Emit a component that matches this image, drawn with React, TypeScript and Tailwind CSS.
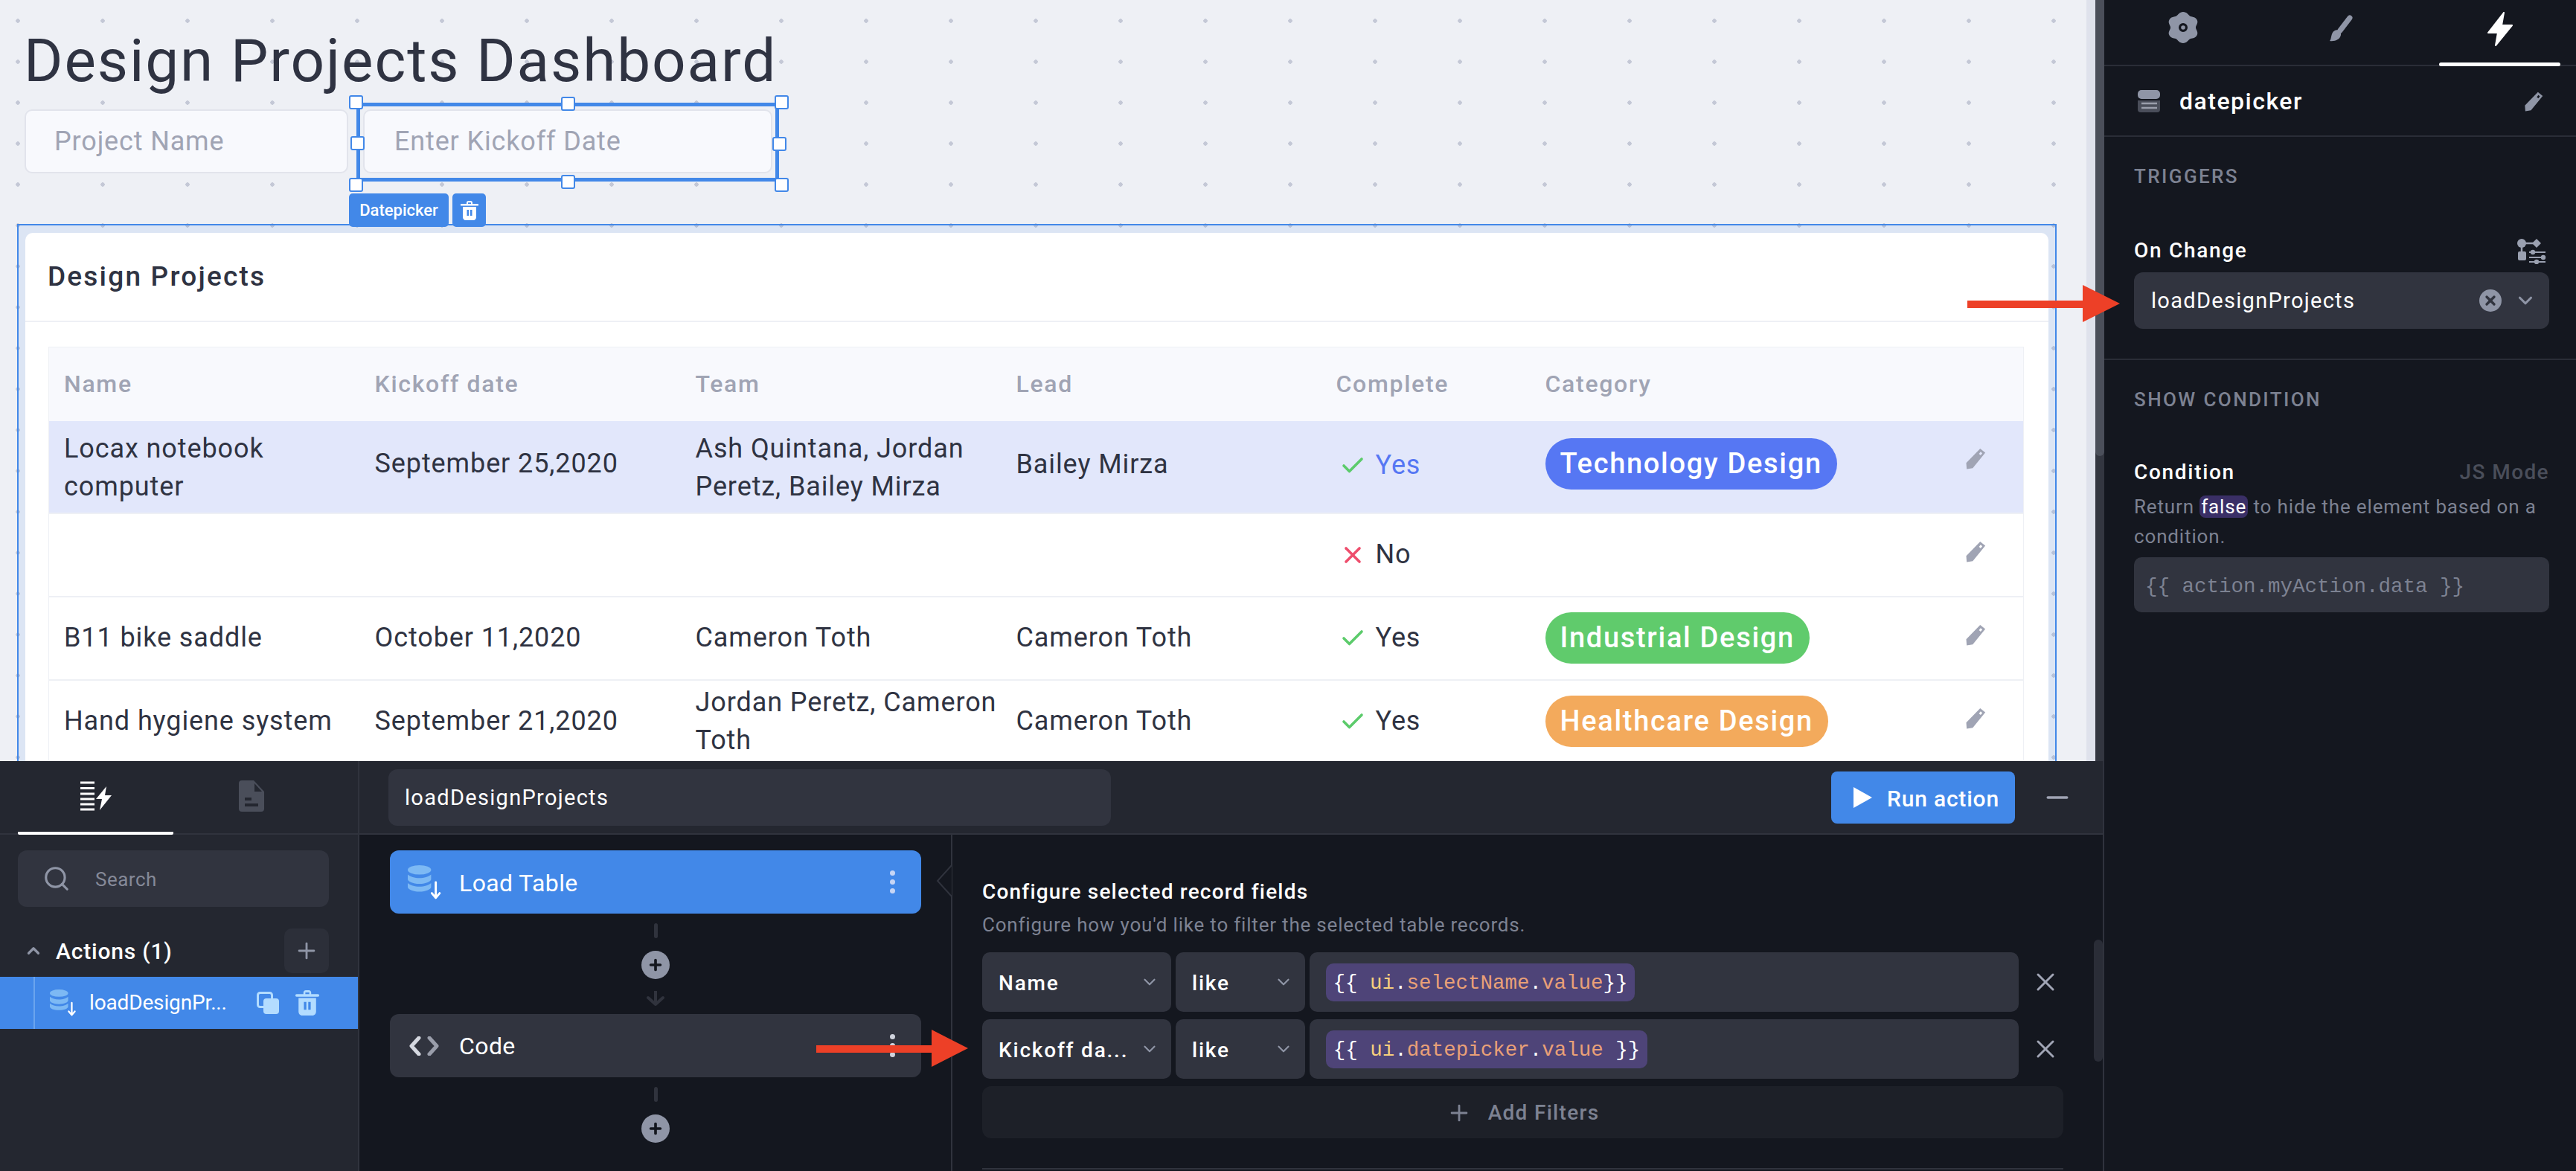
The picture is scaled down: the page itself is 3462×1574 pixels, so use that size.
import React from 'react';
import { Check, ChevronDown, ChevronUp, Plus, Search, X, Minus } from 'lucide-react';

const TrashIcon = ({ className }: { className?: string }) => (
  <svg viewBox="0 0 24 26" className={className} fill="currentColor">
    <path d="M8 4V2.500C8 1.100 9 0 10.500 0h3C15 0 16 1.100 16 2.500V4h7a1 1 0 0 1 0 2.600H1A1 1 0 0 1 1 4zM10 4h4V2.200h-4z" />
    <path fillRule="evenodd" d="M3 8h18v14c0 2.200-1.600 4-3.600 4H6.600C4.600 26 3 24.200 3 22zM8.500 12v8h2.500v-8zM13 12v8h2.500v-8z" />
  </svg>
);

const PencilIcon = ({ className }: { className?: string }) => (
  <svg viewBox="0 0 24 24" className={className} fill="currentColor">
    <path fillRule="evenodd" d="M17 1.500l5.500 4.500L9 22.500 2.500 23.500 2 17zM17.500 5l-1.800 2.200 1.800 1.500 1.800-2.200z" />
  </svg>
);

const DbIcon = ({ className }: { className?: string }) => (
  <svg viewBox="0 0 44 44" className={className}>
    <g fill="#7db9f4">
      <ellipse cx="15" cy="6" rx="15" ry="6" />
      <path d="M0 12c3 3 9 4.500 15 4.500S27 15 30 12v6c0 3-6.500 6-15 6S0 21 0 18z" />
      <path d="M0 23c3 3 9 4.500 15 4.500S27 26 30 23v5c0 3-6.500 6-15 6S0 31 0 28z" />
    </g>
    <path d="M36 22v20M31 36l5 6 5-6" fill="none" stroke="white" strokeWidth="2.800" strokeLinecap="round" strokeLinejoin="round" />
  </svg>
);

const Handle = ({ className }: { className: string }) => (
  <div className={`absolute w-[19px] h-[19px] bg-white border-2 border-[#4288e8] rounded-[3px] ${className}`} />
);

const EditCell = ({ className }: { className: string }) => (
  <td>
    <PencilIcon className={`-ml-[5px] w-[30px] h-[30px] text-[#a0a4b4] ${className}`} />
  </td>
);

const Done = ({ highlight }: { highlight?: boolean }) => (
  <span className="flex items-center gap-[13px] pl-[4px]">
    <Check className="w-[36px] h-[36px] text-[#5ccb6b]" strokeWidth={2.4} />
    <span className={highlight ? 'text-[#5677f3]' : ''}>Yes</span>
  </span>
);

const Pill = ({ label, className }: { label: string; className: string }) => (
  <span className={`inline-flex items-center h-[69px] px-[20px] rounded-[35px] text-white text-[38px] tracking-[1.700px] font-medium ${className}`}>
    {label}
  </span>
);

const Row = ({ children, className }: { children: React.ReactNode; className: string }) => (
  <tr className={`border-b-2 border-[#eef0f5] ${className}`}>{children}</tr>
);

const Connector = () => (
  <div className="flex flex-col items-center">
    <div className="w-[5px] h-[20px] mt-[13px] rounded-full bg-[#30333d]" />
    <div className="w-[38px] h-[38px] mt-[17px] rounded-full bg-[#8f95a6] flex items-center justify-center">
      <Plus className="w-[22px] h-[22px] text-[#14171f]" strokeWidth={4} />
    </div>
  </div>
);

const Dots = ({ className }: { className: string }) => (
  <div className="flex flex-col gap-[5px]">
    <div className={`w-[7px] h-[7px] rounded-full ${className}`} />
    <div className={`w-[7px] h-[7px] rounded-full ${className}`} />
    <div className={`w-[7px] h-[7px] rounded-full ${className}`} />
  </div>
);

const FilterSelect = ({ label, className }: { label: string; className: string }) => (
  <div className={`h-full bg-[#31343f] rounded-[10px] flex items-center justify-between pl-[22px] pr-[16px] ${className}`}>
    <span className="pt-[3px] whitespace-nowrap text-white text-[28px] font-medium tracking-[1.800px]">{label}</span>
    <ChevronDown className="shrink-0 w-[26px] h-[26px] text-[#8f95a6]" />
  </div>
);

const FilterRow = ({ label, field, chip }: { label: string; field: string; chip: string }) => (
  <div className="flex items-center h-[80px] gap-[6px]">
    <FilterSelect label={label} className="w-[254px]" />
    <FilterSelect label="like" className="w-[174px]" />
    <div className="h-full w-[953px] bg-[#31343f] rounded-[10px] flex items-center pl-[22px]">
      <span className={`${chip} h-[51px] pt-[3px] flex items-center justify-center whitespace-pre rounded-[10px] bg-[#4e4478] text-white font-['Liberation_Mono',monospace] text-[27.500px]`}>
        {'{{ '}
        <span className="text-[#f6cf7d]">ui</span>.<span className="text-[#e9a077]">{field}</span>.<span className="text-[#e9a077]">value</span>
        {field === 'datepicker' ? ' }}' : '}}'}
      </span>
    </div>
    <X className="ml-[10px] w-[40px] h-[40px] text-[#a0a4b4]" strokeWidth={1.800} />
  </div>
);

const Arrow = ({ className, viewBox, points }: { className: string; viewBox: string; points: string }) => (
  <svg viewBox={viewBox} className={`absolute ${className}`}>
    <polygon points={points} fill="#ed4027" />
  </svg>
);

export default function App() {
  return (
    <div className="relative flex w-[3462px] h-[1574px] overflow-hidden font-['Roboto',sans-serif] text-[#2f3342]">
      {/* Editor column */}
      <div className="flex flex-col w-[2828px]">
        <div className="flex h-[1023px] overflow-hidden">
          <div className="w-[2804px] pt-[35px] bg-[#eef0f5] bg-[radial-gradient(circle_at_24px_28px,#c4c8d6_2.500px,transparent_3px)] bg-[length:114px_55px]">
            <h1 className="ml-[32px] text-[80px] leading-[94px] tracking-[1.900px] font-normal">Design Projects Dashboard</h1>
            <div className="flex gap-[20px] ml-[33px] mt-[18px] text-[36px] tracking-[0.850px] text-[#a0a4b4]">
              <div className="w-[435px] h-[86px] flex items-center pl-[38px] bg-[#f8f9fd] border-2 border-[#e2e4ec] rounded-[10px]">Project Name</div>
              <div className="relative w-[550px] h-[86px] flex items-center pl-[40px] bg-[#f8f9fd] border-2 border-[#e2e4ec] rounded-[10px]">
                Enter Kickoff Date
                <div className="absolute -left-[11px] -right-[11px] -top-[11px] -bottom-[13px] border-[5px] border-[#4288e8]">
                  <Handle className="-left-[15px] -top-[15px]" />
                  <Handle className="left-[270px] -top-[13px]" />
                  <Handle className="left-[557px] -top-[15px]" />
                  <Handle className="-left-[13px] top-[40px]" />
                  <Handle className="left-[554px] top-[41px]" />
                  <Handle className="-left-[15px] top-[96px]" />
                  <Handle className="left-[270px] top-[92px]" />
                  <Handle className="left-[557px] top-[96px]" />
                  <div className="absolute z-10 -left-[15px] top-[117px] flex gap-[5px] text-white tracking-normal">
                    <div className="h-[45px] w-[134px] flex items-center justify-center bg-[#4288e8] rounded-[5px] text-[22px] font-medium">Datepicker</div>
                    <div className="h-[45px] w-[45px] flex items-center justify-center bg-[#4288e8] rounded-[5px]">
                      <TrashIcon className="w-[24px] h-[26px]" />
                    </div>
                  </div>
                </div>
              </div>
            </div>

            {/* Table container, selected on the canvas */}
            <div className="ml-[23px] mt-[68px] w-[2741px] h-[760px] pt-[10px] px-[9px] border-2 border-[#4288e8] bg-[#4288e8]/10">
              <div className="h-full bg-white rounded-t-[10px]">
                <div className="h-[120px] flex items-center pl-[30px] border-b-2 border-[#eef0f5] text-[37px] font-medium tracking-[2.200px]">Design Projects</div>
                <div className="pt-[33px] pl-[31px]">
                  <table className="w-[2655px] table-fixed border-collapse text-[36px] leading-[51px] border border-[#eef0f5]">
                    <colgroup>
                      <col className="w-[416px]" />
                      <col className="w-[431px]" />
                      <col className="w-[431px]" />
                      <col className="w-[430px]" />
                      <col className="w-[281px]" />
                      <col className="w-[568px]" />
                      <col />
                    </colgroup>
                    <thead>
                      <tr className="h-[99px] bg-[#f8f9fd] text-[#a0a4b4] text-[32px] text-left">
                        {['Name', 'Kickoff date', 'Team', 'Lead', 'Complete', 'Category', ''].map(h => (
                          <th key={h} className="pl-[22px] first:pl-[20px] font-medium tracking-[1.700px]">{h}</th>
                        ))}
                      </tr>
                    </thead>
                    <tbody className="[&_td]:pl-[22px] [&_td:first-child]:pl-[20px] tracking-[0.900px]">
                      <Row className="h-[124px] bg-[#e2e7fb]">
                        <td className="pt-[3px]">Locax notebook computer</td>
                        <td className="pb-[8px]">September 25,2020</td>
                        <td className="pt-[3px]">Ash Quintana, Jordan Peretz, Bailey Mirza</td>
                        <td className="pb-[6px]">Bailey Mirza</td>
                        <td className="pb-[3px]"><Done highlight /></td>
                        <td><Pill label="Technology Design" className="bg-[#5677f3] -translate-y-[4px]" /></td>
                        <EditCell className="-translate-y-[11px]" />
                      </Row>
                      <Row className="h-[112px]">
                        <td />
                        <td />
                        <td />
                        <td />
                        <td>
                          <span className="flex items-center gap-[13px] pl-[4px]">
                            <X className="w-[36px] h-[36px] text-[#ee4d6c]" strokeWidth={2.4} />
                            No
                          </span>
                        </td>
                        <td />
                        <EditCell className="-translate-y-[5px]" />
                      </Row>
                      <Row className="h-[112px]">
                        <td>B11 bike saddle</td>
                        <td>October 11,2020</td>
                        <td>Cameron Toth</td>
                        <td>Cameron Toth</td>
                        <td><Done /></td>
                        <td><Pill label="Industrial Design" className="bg-[#60cb6c]" /></td>
                        <EditCell className="-translate-y-[5px]" />
                      </Row>
                      <Row className="h-[112px]">
                        <td>Hand hygiene system</td>
                        <td>September 21,2020</td>
                        <td>Jordan Peretz, Cameron Toth</td>
                        <td>Cameron Toth</td>
                        <td><Done /></td>
                        <td><Pill label="Healthcare Design" className="bg-[#f3aa5c]" /></td>
                        <EditCell className="-translate-y-[5px]" />
                      </Row>
                    </tbody>
                  </table>
                </div>
              </div>
            </div>
          </div>
          <div className="w-[12px] bg-[#dfe2ec]" />
          <div className="w-[12px] bg-[#333640]">
            <div className="h-[613px] rounded-b-[6px] bg-[#4b4f5a]" />
          </div>
        </div>

        {/* Actions panel */}
        <div className="relative flex h-[551px] border-r-2 border-[#30333d] bg-[#14171f] text-white">
          <div className="w-[483px] shrink-0 bg-[#242730] border-r-2 border-[#30333d]">
            <div className="h-[99px] flex px-[24px] border-b-2 border-[#30333d]">
              <div className="w-[209px] flex flex-col items-center justify-between border-b-[4px] border-white rounded-b-[2px] -mb-[2px]">
                <svg viewBox="0 0 42 40" className="w-[42px] h-[40px] mt-[27px]">
                  <path d="M0 2h19M0 9.500h19M0 17h19M0 24h19M0 31h19M0 38h19" stroke="white" strokeWidth="3" />
                  <path d="M35 7L21 24h8l-3 15 16-20h-9z" fill="white" />
                </svg>
                <div />
              </div>
              <div className="w-[209px] flex justify-center">
                <svg viewBox="0 0 34 42" className="w-[34px] h-[42px] mt-[26px]">
                  <path d="M4 0h16l14 15v23a4 4 0 0 1-4 4H4a4 4 0 0 1-4-4V4a4 4 0 0 1 4-4z" fill="#4a4e5a" />
                  <path d="M21 4v11h10z" fill="#242730" />
                  <path d="M8 23h9v4H8zM8 31h18v4H8z" fill="#242730" />
                </svg>
              </div>
            </div>
            <div className="ml-[24px] mr-[39px] mt-[21px] h-[76px] flex items-center pl-[33px] rounded-[12px] bg-[#31343f] text-[26px] tracking-[0.500px] text-[#858998]">
              <Search className="w-[38px] h-[38px] text-[#8f95a6]" strokeWidth={2} />
              <span className="ml-[33px] pt-[2px]">Search</span>
            </div>
            <div className="h-[60px] mt-[29px] ml-[32px] mr-[39px] flex items-center">
              <ChevronUp className="w-[26px] h-[26px] text-[#8f95a6]" strokeWidth={3} />
              <span className="ml-[17px] text-[30px] font-medium tracking-[0.800px]">Actions (1)</span>
              <div className="ml-auto w-[60px] h-[60px] flex items-center justify-center rounded-[10px] bg-[#2c2f39]">
                <Plus className="w-[34px] h-[34px] text-[#8f95a6]" strokeWidth={2} />
              </div>
            </div>
            <div className="h-[70px] mt-[5px] flex items-center bg-[#4288e8]">
              <div className="ml-[45px] w-[2px] h-full bg-[#6ba4ee]" />
              <DbIcon className="ml-[20px] w-[36px] h-[36px]" />
              <span className="ml-[17px] text-[28px] w-[205px] -tracking-[0.150px]">loadDesignPr...</span>
              <svg viewBox="0 0 30 30" className="ml-[20px] w-[30px] h-[30px]">
                <rect x="1.500" y="1.500" width="19" height="19" rx="3" fill="none" stroke="#b3dcff" strokeWidth="3" />
                <rect x="9" y="9" width="21" height="21" rx="4" fill="#b3dcff" />
              </svg>
              <TrashIcon className="ml-[21px] w-[34px] h-[34px] text-[#b3dcff]" />
            </div>
          </div>

          <div className="flex-1 flex flex-col">
            <div className="h-[99px] shrink-0 flex items-center bg-[#242730] border-b-2 border-[#30333d] pl-[39px]">
              <div className="w-[971px] h-[76px] flex items-center pl-[22px] pt-[3px] rounded-[12px] bg-[#31343f] text-[29px] tracking-[1.300px]">loadDesignProjects</div>
              <div className="ml-[968px] w-[247px] h-[70px] flex items-center pl-[30px] gap-[20px] rounded-[8px] bg-[#4288e8] text-[30px] font-medium tracking-[0.800px]">
                <svg viewBox="0 0 25 28" className="w-[25px] h-[28px]"><polygon points="0,0 25,14 0,28" fill="white" /></svg>
                <span className="pt-[3px]">Run action</span>
              </div>
              <Minus className="ml-[35px] w-[44px] h-[44px] text-[#a0a4b4]" strokeWidth={1.800} />
            </div>
            <div className="flex-1 flex min-h-0">
              <div className="relative w-[797px] pl-[41px] pr-[40px] pt-[21px] border-r-2 border-[#30333d]">
                <div className="h-[85px] flex items-center justify-between pl-[24px] pr-[35px] rounded-[12px] bg-[#4288e8]">
                  <div className="flex items-center">
                    <DbIcon className="w-[46px] h-[46px]" />
                    <span className="ml-[23px] pt-[2px] text-[32px] tracking-[0.400px]">Load Table</span>
                  </div>
                  <Dots className="bg-[#c6d5f5]" />
                </div>
                <Connector />
                <div className="flex justify-center mt-[16px] h-[20px]">
                  <svg viewBox="0 0 26 20" className="w-[26px] h-[20px]">
                    <path d="M13 0v18M3 9l10 9 10-9" fill="none" stroke="#30333d" strokeWidth="4" strokeLinecap="round" strokeLinejoin="round" />
                  </svg>
                </div>
                <div className="h-[85px] mt-[11px] flex items-center justify-between pl-[26px] pr-[35px] rounded-[12px] bg-[#31343f]">
                  <div className="flex items-center">
                    <svg viewBox="0 0 40 26" className="w-[40px] h-[26px]" fill="none" strokeWidth="5" strokeLinecap="round" strokeLinejoin="round">
                      <path d="M13 2L3 13l10 11" stroke="#d5d8e0" />
                      <path d="M27 2l10 11-10 11" stroke="#9a9eab" />
                    </svg>
                    <span className="ml-[27px] text-[32px] tracking-[0.400px]">Code</span>
                  </div>
                  <Dots className="bg-[#cfd2dc]" />
                </div>
                <Connector />
                <svg viewBox="0 0 22 42" className="absolute -right-[2px] top-[41px] w-[22px] h-[42px]">
                  <path d="M21 0L2 21l19 21" fill="#14171f" stroke="#30333d" strokeWidth="2" />
                </svg>
              </div>
              <div className="relative flex-1 pl-[40px] overflow-hidden">
                <div className="mt-[59px] text-[28px] leading-[36px] font-medium tracking-[1.200px]">Configure selected record fields</div>
                <div className="mt-[8px] text-[26px] leading-[36px] text-[#7d8292] tracking-[0.800px]">Configure how you'd like to filter the selected table records.</div>
                <div className="mt-[19px] flex flex-col gap-[10px]">
                  <FilterRow label="Name" field="selectName" chip="w-[415px]" />
                  <FilterRow label="Kickoff da..." field="datepicker" chip="w-[432px]" />
                </div>
                <div className="mt-[10px] w-[1453px] h-[70px] pt-[2px] flex items-center justify-center gap-[22px] rounded-[12px] bg-[#1d2028] text-[28px] font-medium text-[#7d8292] tracking-[1.300px]">
                  <Plus className="w-[34px] h-[34px]" strokeWidth={2} />
                  Add Filters
                </div>
                <div className="mt-[40px] w-[1453px] h-[2px] bg-[#30333d]" />
                <div className="absolute right-0 top-[141px] w-[12px] h-[164px] rounded-[6px] bg-[#2a2d37]" />
              </div>
            </div>
          </div>
        </div>
      </div>

      {/* Properties panel */}
      <div className="flex-1 bg-[#14171f] text-white">
        <div className="h-[89px] flex border-b-2 border-[#2a2d37]">
          <div className="w-[212px] flex justify-center pt-[16px]">
            <svg viewBox="0 0 42 42" className="w-[42px] h-[42px]">
              <path fillRule="evenodd" fill="#8f95a6" d="M21 0c5 0 7 4 9 5.500s7 .5 9.500 5-1.500 7.500-1.500 10.500 4 6 1.500 10.500-7 3.500-9.500 5-4 5.500-9 5.500-7-4-9-5.500-7-.5-9.500-5 1.500-7.500 1.500-10.500-4-6-1.500-10.500 7-3.500 9.500-5S16 0 21 0zm0 15a6 6 0 1 0 0 12 6 6 0 0 0 0-12z" />
              <circle cx="21" cy="21" r="2.800" fill="#8f95a6" />
            </svg>
          </div>
          <div className="w-[212px] flex justify-center pt-[20px]">
            <svg viewBox="0 0 36 36" className="w-[36px] h-[36px]">
              <path d="M30 4L17 21" stroke="#8f95a6" strokeWidth="7" strokeLinecap="round" />
              <path d="M10 21c4-2 9 1 8 6-1 6-8 9-15 8 3-3 1-11 7-14z" fill="#8f95a6" />
            </svg>
          </div>
          <div className="ml-[26px] w-[163px] flex flex-col items-center justify-between">
            <svg viewBox="0 0 34 46" className="w-[34px] h-[46px] mt-[16px]">
              <path d="M22 1L1 28h13l-3 17 22-27H19z" fill="white" stroke="white" strokeWidth="2" strokeLinejoin="round" />
            </svg>
            <div className="w-full h-[5px] rounded-full bg-white -mb-[2px]" />
          </div>
        </div>
        <div className="h-[95px] flex items-center pl-[45px] pr-[43px] border-b-2 border-[#2a2d37]">
          <svg viewBox="0 0 30 30" className="w-[30px] h-[30px]">
            <rect x="0" y="0" width="30" height="12" rx="5" fill="#8f95a6" />
            <path d="M0 14h30v12a4 4 0 0 1-4 4H4a4 4 0 0 1-4-4z" fill="#4a4e5a" />
            <path d="M5 18h21M5 24h21" stroke="#9a9eab" strokeWidth="2.500" />
          </svg>
          <span className="ml-[26px] text-[32px] font-medium tracking-[1.500px]">datepicker</span>
          <PencilIcon className="ml-auto w-[28px] h-[28px] text-[#8f95a6]" />
        </div>
        <div className="pl-[40px] pr-[36px] flex flex-col">
          <div className="mt-[37px] leading-[32px] text-[26px] text-[#7d8292] font-medium tracking-[2.400px]">TRIGGERS</div>
          <div className="mt-[64px] h-[40px] flex items-center justify-between">
            <span className="text-[28px] font-medium tracking-[1.700px]">On Change</span>
            <svg viewBox="23 14 40 36" className="w-[40px] h-[36px] mr-[3px]" fill="#9aa0b0">
              <circle cx="29" cy="22" r="6" />
              <path d="M49 16l6 6-6 6-6-6z" />
              <path d="M29 22h20M29 22v14" stroke="#9aa0b0" strokeWidth="2.500" />
              <rect x="24" y="33" width="11" height="12" rx="2" />
              <path d="M39 34h22M39 41h22M39 47h22" stroke="#9aa0b0" strokeWidth="2" />
              <circle cx="44" cy="34" r="3.200" />
              <circle cx="58" cy="41" r="3.200" />
              <circle cx="49" cy="47" r="3.200" />
            </svg>
          </div>
          <div className="mt-[9px] h-[76px] flex items-center pl-[23px] pr-[17px] rounded-[12px] bg-[#31343f]">
            <span className="pt-[2px] text-[29px] tracking-[1.300px]">loadDesignProjects</span>
            <div className="ml-auto w-[30px] h-[30px] flex items-center justify-center rounded-full bg-[#8f95a6]">
              <X className="w-[20px] h-[20px] text-[#31343f]" strokeWidth={4} />
            </div>
            <ChevronDown className="ml-[17px] w-[30px] h-[30px] text-[#8f95a6]" strokeWidth={2.500} />
          </div>
        </div>
        <div className="mt-[40px] h-[2px] bg-[#2a2d37]" />
        <div className="pl-[40px] pr-[36px] flex flex-col">
          <div className="mt-[37px] leading-[32px] text-[26px] text-[#7d8292] font-medium tracking-[2.400px]">SHOW CONDITION</div>
          <div className="mt-[62px] h-[40px] flex items-center justify-between">
            <span className="text-[28px] font-medium tracking-[1.700px]">Condition</span>
            <span className="text-[28px] text-[#4a4e5a] font-medium tracking-[1.400px]">JS Mode</span>
          </div>
          <div className="mt-[6px] text-[26px] leading-[40px] text-[#7d8292] tracking-[0.850px] whitespace-nowrap">
            <div>Return <span className="px-[2px] rounded-[8px] bg-[#3a2f66] text-white">false</span> to hide the element based on a</div>
            <div>condition.</div>
          </div>
          <div className="mt-[8px] h-[74px] pt-[6px] flex items-center pl-[15px] rounded-[10px] bg-[#31343f] font-['Liberation_Mono',monospace] text-[27.500px] text-[#7d8292] whitespace-pre">
            {'{{ action.myAction.data }}'}
          </div>
        </div>
      </div>

      <Arrow className="left-[2644px] top-[383px] w-[205px] h-[50px]" viewBox="0 0 205 50" points="0,21 155,21 155,0 205,25 155,50 155,31 0,31" />
      <Arrow className="left-[1097px] top-[1384px] w-[204px] h-[50px]" viewBox="0 0 204 50" points="0,21 155,21 155,0 204,25 155,50 155,31 0,31" />
    </div>
  );
}
